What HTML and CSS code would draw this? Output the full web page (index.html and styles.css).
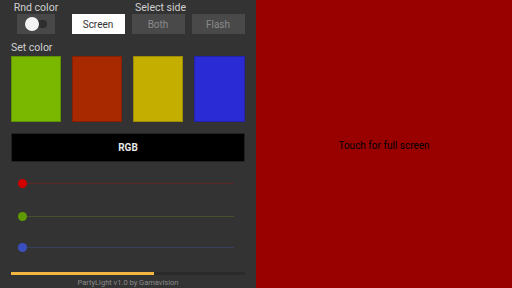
FILE: index.html
```html
<!DOCTYPE html>
<html>
<head>
<meta charset="utf-8">
<link rel="stylesheet" href="styles.css">
</head>
<body>
<div class="app">
  <div class="panel">
    <div class="top">
      <div class="col rnd">
        <div class="label">Rnd color</div>
        <div class="toggle"><div class="track"></div><div class="thumb"></div></div>
      </div>
      <div class="col side">
        <div class="label shift">Select side</div>
        <div class="btns">
          <div class="btn active">Screen</div>
          <div class="btn">Both</div>
          <div class="btn">Flash</div>
        </div>
      </div>
    </div>
    <div class="setlabel">Set color</div>
    <div class="swatches">
      <div class="sw green"></div>
      <div class="sw red"></div>
      <div class="sw yellow"></div>
      <div class="sw blue"></div>
    </div>
    <div class="rgb">RGB</div>
    <div class="slider s-red"><div class="dot"></div><div class="line"></div></div>
    <div class="slider s-green"><div class="dot"></div><div class="line"></div></div>
    <div class="slider s-blue"><div class="dot"></div><div class="line"></div></div>
    <div class="progress"><div class="fill" style="width:61%"></div></div>
    <div class="footer">PartyLight v1.0 by Gamavision</div>
  </div>
  <div class="screen">Touch for full screen</div>
</div>
</body>
</html>
```
FILE: styles.css
```css
* { box-sizing: border-box; }
html, body { margin: 0; padding: 0; }
body { width: 512px; height: 288px; overflow: hidden; font-family: Roboto, "Noto Sans", sans-serif; }
.app { display: flex; width: 512px; height: 288px; }
.panel { width: 256px; height: 288px; background: #333333; display: flex; flex-direction: column; padding: 0 11px; }
.top { display: flex; height: 34px; }
.col { display: flex; flex-direction: column; align-items: center; }
.rnd { width: 38px; margin-left: 6px; }
.side { margin-left: 16px; width: 174px; }
.label { color: #d0d0d0; font-size: 10.5px; line-height: 14px; padding-top: 1px; height: 14px; white-space: nowrap; }
.label.shift { margin-left: 5px; }
.toggle { position: relative; width: 38px; height: 20px; background: #484848; }
.track { position: absolute; left: 14px; top: 6px; width: 16px; height: 8px; border-radius: 4px; background: #2e2e2e; }
.thumb { position: absolute; left: 8px; top: 3px; width: 14px; height: 14px; border-radius: 50%; background: #f4f4f4; }
.btns { display: flex; gap: 7px; }
.btn { width: 53px; height: 20px; background: #494949; color: #8a8a8a; font-size: 10px; display: flex; align-items: center; justify-content: center; }
.btn.active { background: #ffffff; color: #333; }
.setlabel { color: #d0d0d0; font-size: 10.5px; line-height: 14px; margin-top: 7px; }
.swatches { display: flex; justify-content: space-between; margin-top: 1px; height: 66px; }
.sw { width: 50px; height: 66px; border: 1px solid rgba(0,0,0,0.2); }
.sw:last-child { width: 51px; }
.green { background: #7ab800; }
.red { background: #a82800; }
.yellow { background: #c4ae00; }
.blue { background: #2b2bd6; }
.rgb { margin-top: 11px; height: 29px; background: #000; border: 1px solid #222; color: #e8e8e8; font-weight: bold; font-size: 10px; display: flex; align-items: center; justify-content: center; }
.slider { position: relative; height: 8px; display: flex; align-items: center; margin-left: 7px; width: 216px; }
.s-red { margin-top: 17px; }
.s-green { margin-top: 25px; }
.s-blue { margin-top: 23px; }
.dot { width: 9px; height: 9px; border-radius: 50%; flex: none; position: relative; z-index: 1; }
.line { height: 1px; flex: 1; margin-left: -1px; }
.s-red .dot { background: #d00000; }
.s-red .line { background: #5a2626; }
.s-green .dot { background: #5e9a00; }
.s-green .line { background: #45502e; }
.s-blue .dot { background: #3a4ec0; }
.s-blue .line { background: #37405a; }
.progress { margin-top: 21px; height: 3px; background: #2a2a2a; }
.fill { height: 3px; background: #f3b73f; }
.footer { text-align: center; color: #8a8a8a; font-size: 7.5px; line-height: 10px; margin-top: 3px; }
.screen { flex: 1; background: #990000; color: #000; font-size: 10px; display: flex; align-items: center; justify-content: center; padding-top: 2px; }
```
